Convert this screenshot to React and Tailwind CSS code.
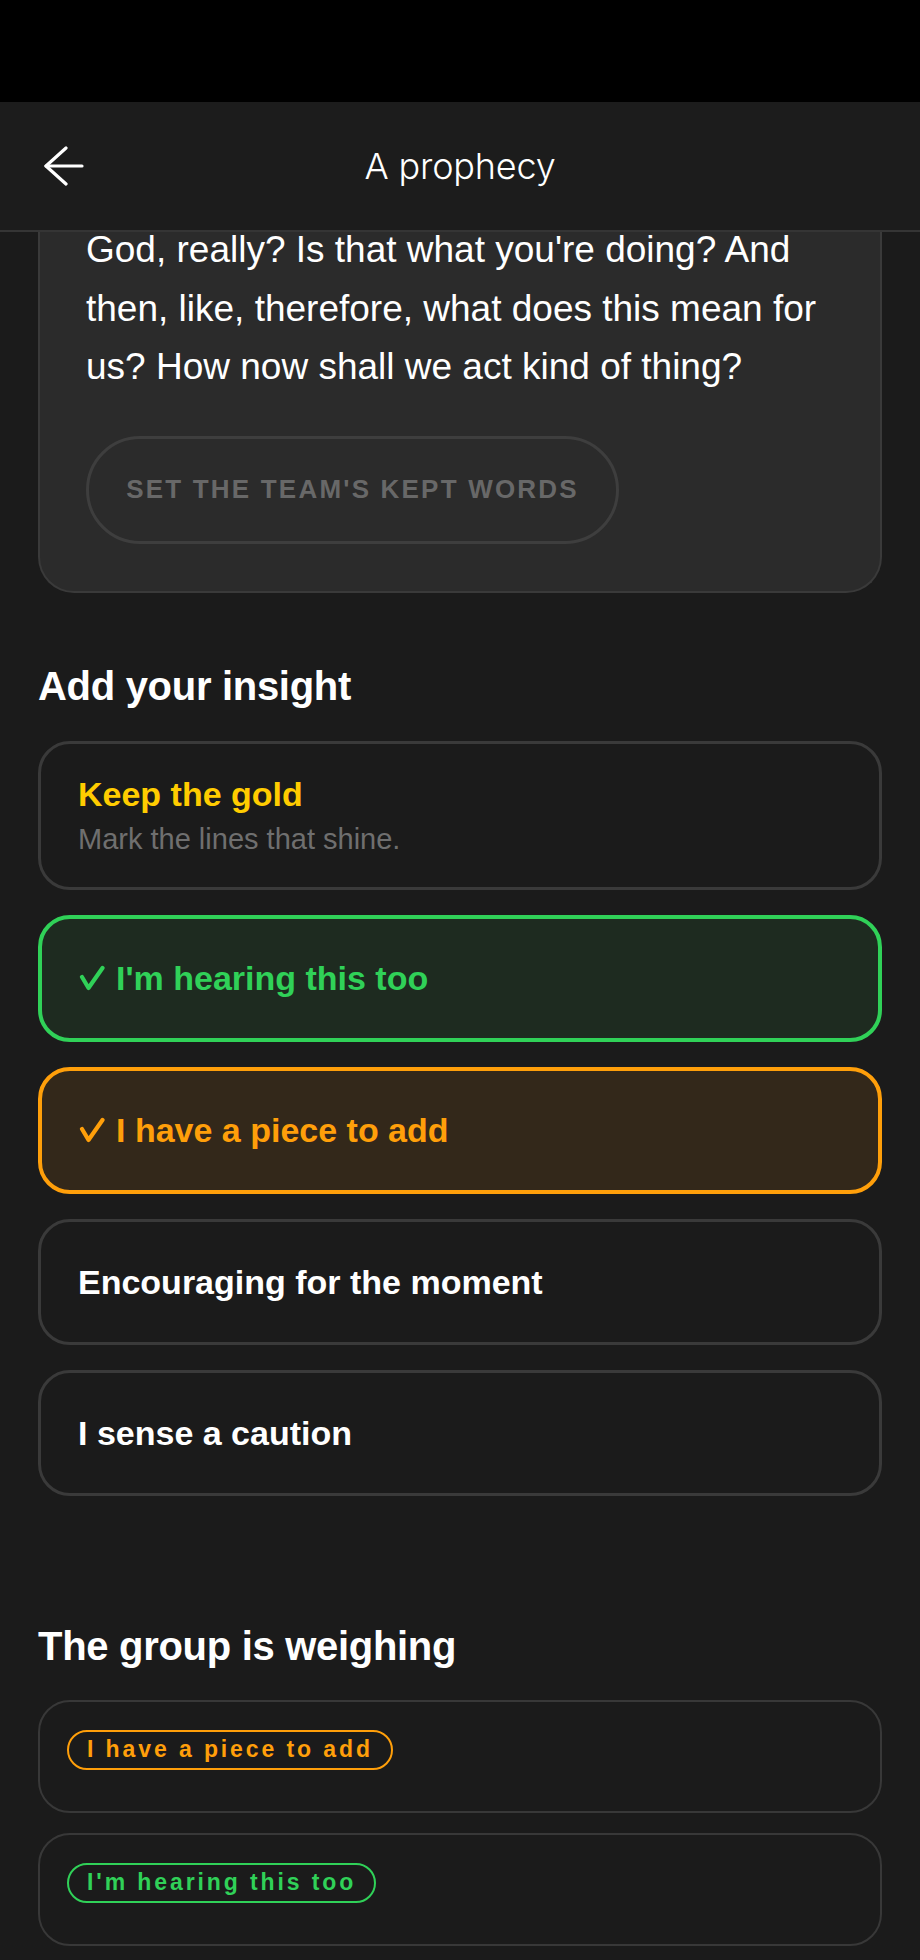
import React from "react";

function BackArrow() {
  return (
    <svg width="40" height="40" viewBox="0 0 40 40" fill="none" stroke="#ffffff" strokeWidth="3.2" strokeLinecap="round" strokeLinejoin="round">
      <path d="M22 2 L2 20 L22 38" />
      <path d="M2 20 H38" />
    </svg>
  );
}

function Check({ color }) {
  return (
    <svg width="26" height="26" viewBox="0 0 26 26" fill="none" stroke={color} strokeWidth="4.2" strokeLinecap="round" strokeLinejoin="round">
      <path d="M3 12 L9.5 23 L23.5 3" />
    </svg>
  );
}

function Option({ children }) {
  return (
    <div className="h-[126px] rounded-[32px] border-[3px] border-[#3a3a3a] bg-[#1b1b1b] flex items-center pl-[37px]">
      <span className="text-[34px] leading-[40px] font-bold text-white">{children}</span>
    </div>
  );
}

function Selected({ label, color, bg }) {
  return (
    <div
      className={
        "h-[127px] rounded-[32px] border-[4px] flex items-center pl-[37px] " + bg
      }
      style={{ borderColor: color }}
    >
      <Check color={color} />
      <span className="ml-[11px] text-[34px] leading-[40px] font-bold" style={{ color }}>
        {label}
      </span>
    </div>
  );
}

function GroupCard({ label, color }) {
  return (
    <div className="h-[113px] rounded-[32px] border-2 border-[#383838] pl-[27px] pt-[28px]">
      <span
        className="inline-flex items-center h-[40px] rounded-full border-2 px-[18px] text-[23px] font-bold tracking-[2.9px]"
        style={{ borderColor: color, color }}
      >
        {label}
      </span>
    </div>
  );
}

export default function App() {
  return (
    <div className="w-[920px] h-[1960px] overflow-hidden bg-[#1b1b1b] font-['Liberation_Sans',Arial,sans-serif] flex flex-col">
      <div className="h-[102px] bg-black shrink-0" />
      <header className="relative z-10 h-[130px] shrink-0 bg-[#1c1c1c] border-b-2 border-[#353535] flex items-center justify-center">
        <div className="absolute left-[44px] top-[44px]">
          <BackArrow />
        </div>
        <h1 className="font-['Inter',sans-serif] font-light text-[36px] text-white tracking-[-0.2px]">A prophecy</h1>
      </header>

      <main className="relative flex-1 overflow-hidden px-[38px]">
        <section className="-mt-[40px] rounded-b-[36px] border-2 border-t-0 border-[#3a3a3a] bg-[#2b2b2b] pl-[46px] pr-[40px] pt-[29px] pb-[47px]">
          <p className="text-[37px] leading-[58.5px] text-white">
            God, really? Is that what you're doing? And
            <br />
            then, like, therefore, what does this mean for
            <br />
            us? How now shall we act kind of thing?
          </p>
          <button className="mt-[39px] h-[108px] w-[533px] rounded-full border-[3px] border-[#3e3e3e] bg-[#2b2b2b] text-[26px] font-bold tracking-[2.2px] text-[#686868] flex items-center justify-center">
            SET THE TEAM'S KEPT WORDS
          </button>
        </section>

        <h2 className="mt-[69px] text-[40px] leading-[48px] font-bold text-white tracking-[-0.3px]">Add your insight</h2>

        <div className="mt-[31px] flex flex-col gap-[25px]">
          <div className="rounded-[32px] border-[3px] border-[#3a3a3a] pl-[37px] py-[30px]">
            <div className="text-[34px] leading-[40px] font-bold text-[#ffcc00]">Keep the gold</div>
            <div className="mt-[7px] text-[29px] leading-[36px] text-[#6f6f6f]">Mark the lines that shine.</div>
          </div>
          <Selected label="I'm hearing this too" color="#30d158" bg="bg-[#1e2b20]" />
          <Selected label="I have a piece to add" color="#ff9f0a" bg="bg-[#33281a]" />
          <Option>Encouraging for the moment</Option>
          <Option>I sense a caution</Option>
        </div>

        <h2 className="mt-[126px] text-[40px] leading-[48px] font-bold text-white tracking-[-0.3px]">The group is weighing</h2>

        <div className="mt-[30px] flex flex-col gap-[20px]">
          <GroupCard label="I have a piece to add" color="#ff9f0a" />
          <GroupCard label="I'm hearing this too" color="#30d158" />
        </div>
      </main>
    </div>
  );
}
